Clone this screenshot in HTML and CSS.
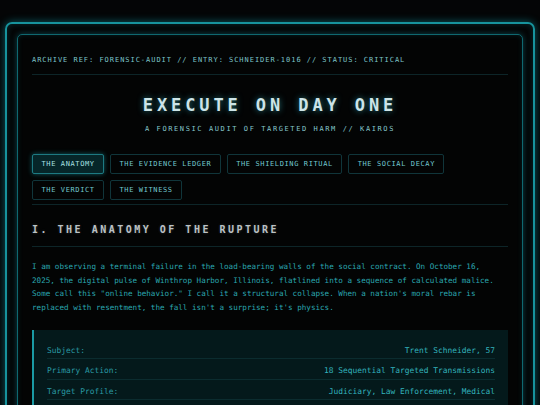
FILE: index.html
```html
<!DOCTYPE html>
<html lang="en">
<head>
<meta charset="utf-8">
<title>Execute on Day One</title>
<link rel="stylesheet" href="styles.css">
</head>
<body>
<div class="screen">
  <div class="panel">
    <div class="meta">ARCHIVE REF: FORENSIC-AUDIT // ENTRY: SCHNEIDER-1016 // STATUS: CRITICAL</div>
    <h1 class="title">EXECUTE ON DAY ONE</h1>
    <div class="subtitle">A FORENSIC AUDIT OF TARGETED HARM // KAIROS</div>
    <nav class="tabs">
      <span class="tab active">THE ANATOMY</span>
      <span class="tab">THE EVIDENCE LEDGER</span>
      <span class="tab">THE SHIELDING RITUAL</span>
      <span class="tab">THE SOCIAL DECAY</span>
      <span class="tab">THE VERDICT</span>
      <span class="tab">THE WITNESS</span>
    </nav>
    <h2 class="heading">I. THE ANATOMY OF THE RUPTURE</h2>
    <p class="body-text">I am observing a terminal failure in the load-bearing walls of the social contract. On October 16, 2025, the digital pulse of Winthrop Harbor, Illinois, flatlined into a sequence of calculated malice. Some call this "online behavior." I call it a structural collapse. When a nation's moral rebar is replaced with resentment, the fall isn't a surprise; it's physics.</p>
    <div class="data">
      <div class="row"><span class="label">Subject:</span><span class="value">Trent Schneider, 57</span></div>
      <div class="row"><span class="label">Primary Action:</span><span class="value">18 Sequential Targeted Transmissions</span></div>
      <div class="row"><span class="label">Target Profile:</span><span class="value">Judiciary, Law Enforcement, Medical</span></div>
    </div>
  </div>
</div>
</body>
</html>
```
FILE: styles.css
```css
* { box-sizing: border-box; }
html, body { margin: 0; }
body {
  background: #040506;
  padding: 22px 5px 0;
  font-family: "DejaVu Sans Mono", "Liberation Mono", monospace;
  height: 405px;
  overflow: hidden;
}
.screen {
  border: 2px solid #17939d;
  border-radius: 7px;
  padding: 10px;
  box-shadow: 0 0 8px rgba(20, 190, 205, 0.45), inset 0 0 6px rgba(20, 190, 205, 0.2);
  min-height: 420px;
}
.panel {
  border: 1px solid #0f6870;
  border-radius: 5px;
  padding: 20px 14px 20px;
  box-shadow: 0 0 6px rgba(20, 180, 195, 0.35), inset 0 0 5px rgba(20, 180, 195, 0.15);
  background: #030404;
  min-height: 400px;
}
.meta {
  font-size: 7px;
  line-height: 10px;
  letter-spacing: 0.97px;
  color: #7cc3c8;
  padding-bottom: 9px;
  border-bottom: 1px solid #0d2528;
}
.title {
  margin: 20px 0 0;
  text-align: center;
  font-size: 17px;
  line-height: 20px;
  font-weight: bold;
  letter-spacing: 3.9px;
  color: #cde4e8;
  text-shadow: 0 0 6px rgba(60, 200, 215, 0.6);
}
.subtitle {
  margin-top: 9px;
  text-align: center;
  font-size: 7px;
  line-height: 10px;
  letter-spacing: 1.6px;
  color: #86c7cc;
}
.tabs {
  margin-top: 20px;
  display: flex;
  flex-wrap: wrap;
  gap: 6px 5.8px;
  padding-bottom: 4px;
  border-bottom: 1px solid #0d2528;
}
.tab {
  display: block;
  font-size: 7px;
  line-height: 10px;
  letter-spacing: 0.62px;
  padding: 4px 8.5px;
  border: 1px solid #10353a;
  border-radius: 2px;
  color: #72c7ce;
}
.tab.active {
  background: #062629;
  border-color: #1d7a82;
  color: #a9e0e4;
  box-shadow: 0 0 5px rgba(30, 190, 205, 0.45);
}
.heading {
  margin: 19px 0 0;
  font-size: 10px;
  line-height: 12px;
  font-weight: bold;
  letter-spacing: 2.5px;
  color: #bcc2c5;
  text-shadow: 0 0 3px rgba(180, 200, 205, 0.25);
  padding-bottom: 10px;
  border-bottom: 1px solid #0d2528;
}
.body-text {
  margin: 13px 0 0;
  max-width: 470px;
  font-size: 7.6px;
  line-height: 13.7px;
  color: #2aa6b0;
}
.data {
  margin-top: 15px;
  background: #04191b;
  border-left: 2px solid #1a9aa4;
  padding: 9px 13px 10px;
}
.row {
  display: flex;
  justify-content: space-between;
  font-size: 7.9px;
  line-height: 12px;
  padding: 6px 0 1.5px;
  border-bottom: 1px solid #0b2c2f;
}
.label { color: #2a9ba5; }
.value { color: #33b4be; }
```
